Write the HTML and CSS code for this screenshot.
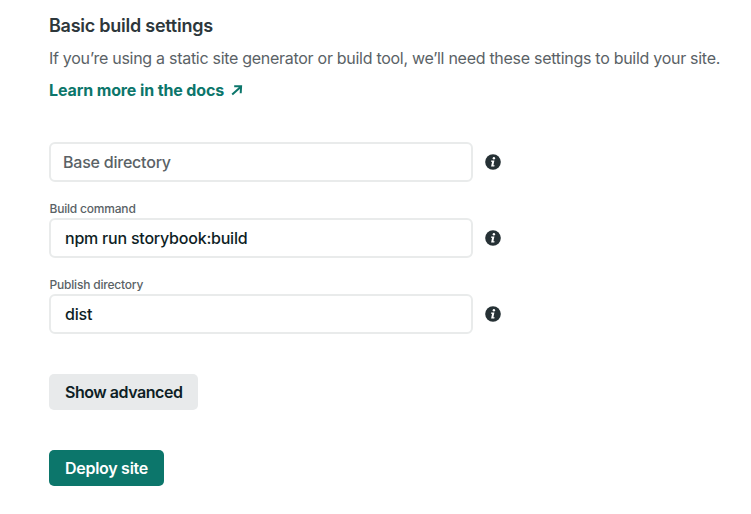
FILE: index.html
```html
<!DOCTYPE html>
<html lang="en">
<head>
<meta charset="utf-8">
<title>Basic build settings</title>
<link rel="stylesheet" href="styles.css">
</head>
<body>
<svg class="defs" width="0" height="0" aria-hidden="true">
  <symbol id="info" viewBox="0 0 16 16">
    <circle cx="8" cy="8" r="7.8" fill="#263135"/>
    <circle cx="8.9" cy="4.2" r="1.2" fill="#fff"/>
    <path d="M6.2 6.5h3.2L8.4 11.3h1.2l-.3 1.2H6.1l1-4.8H5.9z" fill="#fff"/>
  </symbol>
</svg>
<main class="page">
  <header class="intro">
    <h2>Basic build settings</h2>
    <p>If you’re using a static site generator or build tool, we’ll need these settings to build your site.</p>
    <a class="docs" href="#">Learn more in the docs<svg class="arrow" viewBox="0 0 12 12"><path d="M1.2 10.6 9.6 2.9M3.2 2.3 10.1 2.3 9.7 9.2" fill="none" stroke="currentColor" stroke-width="2"/></svg></a>
  </header>
  <form class="form">
    <div class="field">
      <div class="row"><div class="box box-empty">Base directory</div><svg class="info"><use href="#info"/></svg></div>
    </div>
    <div class="field">
      <label>Build command</label>
      <div class="row"><div class="box">npm run storybook:build</div><svg class="info"><use href="#info"/></svg></div>
    </div>
    <div class="field">
      <label>Publish directory</label>
      <div class="row"><div class="box">dist</div><svg class="info"><use href="#info"/></svg></div>
    </div>
    <button type="button" class="btn btn-plain">Show advanced</button>
    <button type="button" class="btn btn-primary">Deploy site</button>
  </form>
</main>
</body>
</html>
```
FILE: styles.css
```css
* { box-sizing: border-box; }
body { margin: 0; background: #fff; color: #0e1e25; font-family: Inter, "Liberation Sans", sans-serif; font-size: 16px; line-height: 24px; white-space: nowrap; }
.defs { position: absolute; }
.page { padding: 14px 0 0 49px; }
h2 { margin: 0; font-size: 18px; font-weight: 600; line-height: 24px; letter-spacing: -0.25px; color: #2d373b; }
p { margin: 8px 0; color: #5a6266; letter-spacing: -0.285px; }
.docs { display: flex; align-items: center; gap: 7px; color: #0c766b; font-weight: 700; text-decoration: none; letter-spacing: -0.12px; }
.arrow { width: 12px; height: 12px; }
.form { display: flex; flex-direction: column; align-items: flex-start; margin-top: 40px; }
.field { margin-bottom: 20px; }
label { display: block; height: 16px; font-size: 12px; line-height: 14px; font-weight: 500; color: #5a6266; padding-left: 0.5px; letter-spacing: -0.2px; }
.row { display: flex; align-items: center; gap: 12px; }
.box { width: 424px; height: 40px; display: flex; align-items: center; border: 2px solid #e9ebeb; border-radius: 6px; padding-left: 14px; font-weight: 500; letter-spacing: -0.22px; }
.box-empty { padding-left: 12px; color: #5a6266; }
.info { width: 16px; height: 16px; }
.btn { height: 36px; border: 0; border-radius: 5px; padding: 0 0 0 16px; text-align: left; font: 600 16px/24px Inter, sans-serif; letter-spacing: -0.28px; }
.btn-plain { width: 149px; margin-top: 20px; background: #e8eaeb; color: #0e1e25; letter-spacing: -0.46px; }
.btn-primary { width: 115px; margin-top: 40px; background: #0c766b; color: #fff; }
```
